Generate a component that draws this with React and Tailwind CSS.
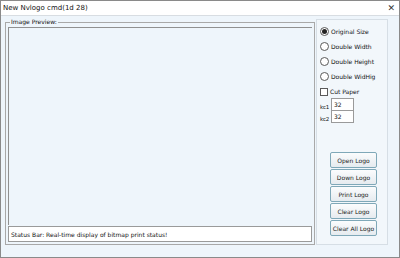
import React from "react";

function Radio({ label, checked }) {
  return (
    <div className="flex items-center gap-[2px] h-[15px]">
      <span className="w-[9px] h-[9px] rounded-full border border-[#5a5a5a] bg-white flex items-center justify-center">
        {checked && <span className="w-[5px] h-[5px] rounded-full bg-[#222]" />}
      </span>
      <span className="text-[#111]">{label}</span>
    </div>
  );
}

function Btn({ label }) {
  return (
    <div className="w-[47px] h-[16px] rounded-[2px] border border-[#7fa8b8] bg-gradient-to-b from-[#fbfcfd] to-[#e6ebef] flex items-center justify-center text-[#222]">
      {label}
    </div>
  );
}

export default function App() {
  return (
    <div
      className="w-[400px] h-[258px] bg-white border border-[#8a8a8a] flex flex-col text-[6px] text-[#111] overflow-hidden"
      style={{ fontFamily: "Tahoma, 'DejaVu Sans', 'Liberation Sans', sans-serif" }}
    >
      <div className="h-[14px] flex items-center justify-between pl-[2px] pr-[4px] bg-white">
        <span className="text-[7px]">New Nvlogo cmd(1d 28)</span>
        <span className="text-[9px] text-[#333] leading-none">✕</span>
      </div>
      <div className="flex-1 bg-[#eef5fb] border-t border-[#d8dde2] flex flex-col">
        <div className="flex flex-1 pt-[3px] pl-[4px] pr-[11px] gap-[1px]">
          <div className="relative w-[310px] border border-[#a8a8a8] mt-[3px] mb-[1px] flex flex-col pl-[2px] pr-[2px] pt-[4px] pb-[2px]">
            <span className="absolute -top-[4px] left-[4px] bg-[#eef5fb] px-[1px] leading-none text-[6px]">Image Preview:</span>
            <div className="flex-1 border-l border-t border-[#909090] bg-[#eef5fb]" />
            <div className="h-[16px] mt-[1px] bg-white border border-[#9a9a9a] flex items-center px-[2px]">
              Status Bar: Real-time display of bitmap print status!
            </div>
          </div>
          <div className="w-[72px] border border-[#d6dee5] bg-[#f2f7fb] flex flex-col pl-[3px] pt-[4px] mb-[1px]">
            <Radio label="Original Size" checked />
            <Radio label="Double Width" />
            <Radio label="Double Height" />
            <Radio label="Double WidHig" />
            <div className="flex items-center gap-[2px] h-[15px]">
              <span className="w-[8px] h-[8px] border border-[#5a5a5a] bg-white" />
              <span>Cut Paper</span>
            </div>
            <div className="flex flex-col">
              <div className="flex items-end h-[12px]">
                <span className="w-[11px] text-[5.5px] tracking-[-0.2px]">kc1</span>
                <div className="w-[23px] h-[13px] bg-white border border-[#9a9a9a] px-[2px] pt-[1px]">32</div>
              </div>
              <div className="flex items-end h-[12px]">
                <span className="w-[11px] text-[5.5px] tracking-[-0.2px]">kc2</span>
                <div className="w-[23px] h-[13px] bg-white border border-[#9a9a9a] px-[2px] pt-[1px]">32</div>
              </div>
            </div>
            <div className="flex flex-col gap-[1px] mt-[29px] ml-[10px]">
              <Btn label="Open Logo" />
              <Btn label="Down Logo" />
              <Btn label="Print Logo" />
              <Btn label="Clear Logo" />
              <Btn label="Clear All Logo" />
            </div>
          </div>
        </div>
        <div className="h-[11px]" />
      </div>
    </div>
  );
}
